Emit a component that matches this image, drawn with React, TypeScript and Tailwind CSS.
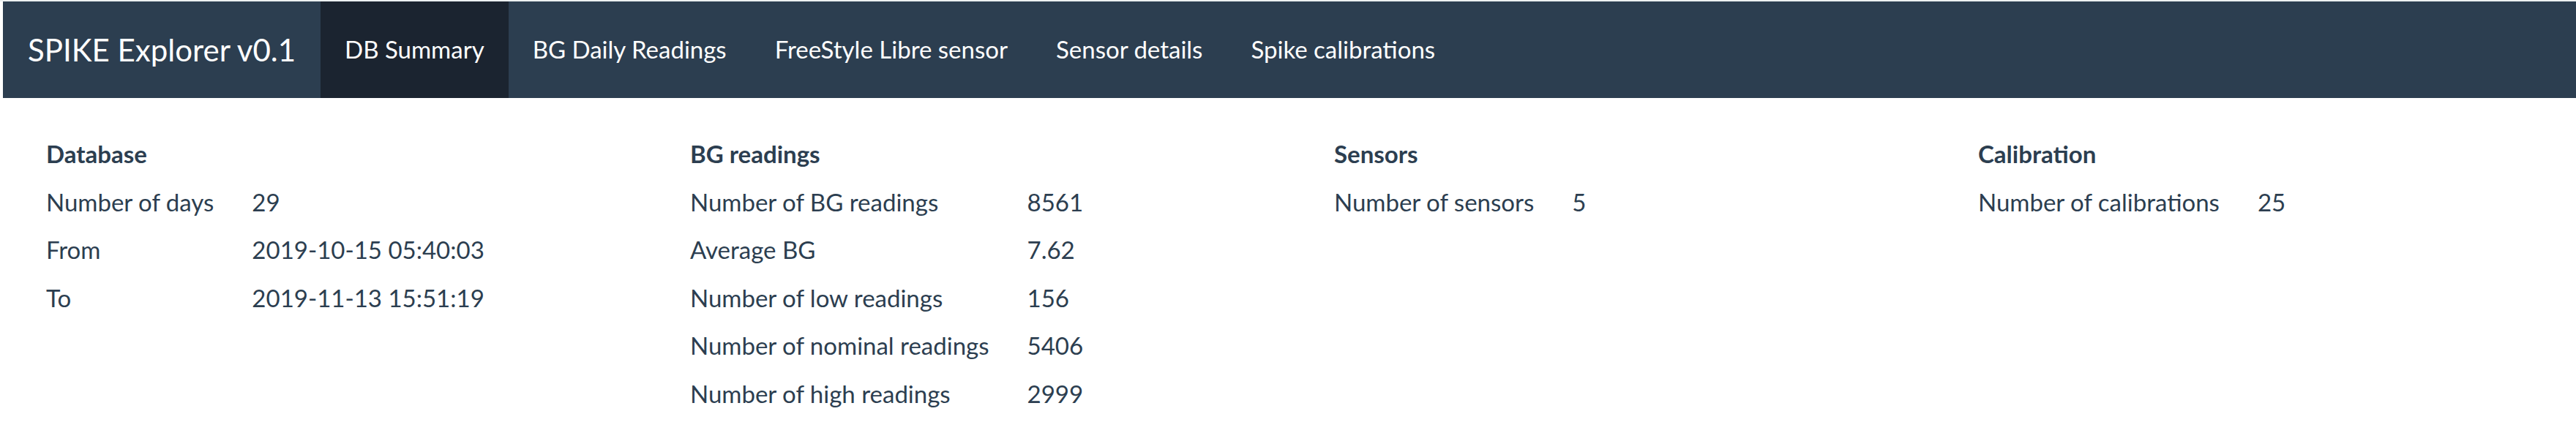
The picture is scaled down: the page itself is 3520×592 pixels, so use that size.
import React from 'react';

type Row = { label: string; value: string };

type Section = {
    title: string;
    rows: Row[];
};

const NAV_ITEMS = [
    'DB Summary',
    'BG Daily Readings',
    'FreeStyle Libre sensor',
    'Sensor details',
    'Spike calibrations',
];

const SECTIONS: Section[] = [
    {
        title: 'Database',
        rows: [
            { label: 'Number of days', value: '29' },
            { label: 'From', value: '2019-10-15 05:40:03' },
            { label: 'To', value: '2019-11-13 15:51:19' },
        ],
    },
    {
        title: 'BG readings',
        rows: [
            { label: 'Number of BG readings', value: '8561' },
            { label: 'Average BG', value: '7.62' },
            { label: 'Number of low readings', value: '156' },
            { label: 'Number of nominal readings', value: '5406' },
            { label: 'Number of high readings', value: '2999' },
        ],
    },
    {
        title: 'Sensors',
        rows: [{ label: 'Number of sensors', value: '5' }],
    },
    {
        title: 'Calibration',
        rows: [{ label: 'Number of calibrations', value: '25' }],
    },
];

const Navbar = () => {
    const active = 'DB Summary';
    return (
        <nav className="flex h-[132px] items-stretch bg-[#2c3e50] pl-[34px] text-white">
            <span className="mr-[34px] flex items-center text-[42px] leading-none">
                SPIKE Explorer v0.1
            </span>
            <ul className="flex items-stretch">
                {NAV_ITEMS.map((item) => (
                    <li
                        key={item}
                        className={
                            item === active
                                ? 'flex items-center bg-[#1b2430] px-[33px] text-[33px]'
                                : 'flex items-center px-[33px] text-[33px]'
                        }
                    >
                        {item}
                    </li>
                ))}
            </ul>
        </nav>
    );
};

const SummaryTable = ({ section }: { section: Section }) => {
    return (
        <div className="pl-[37px]">
            <table className="border-collapse">
                <thead>
                    <tr>
                        <th className="px-[26px] py-[8px] text-left text-[33px] font-bold leading-[1.5]">
                            {section.title}
                        </th>
                        <th className="px-[26px] py-[8px]" />
                    </tr>
                </thead>
                <tbody>
                    {section.rows.map((row) => (
                        <tr key={row.label}>
                            <td className="whitespace-nowrap px-[26px] py-[8px] text-[33px] leading-[1.5]">
                                {row.label}
                            </td>
                            <td className="whitespace-nowrap px-[26px] py-[8px] text-[33px] leading-[1.5]">
                                {row.value}
                            </td>
                        </tr>
                    ))}
                </tbody>
            </table>
        </div>
    );
};

export default function App() {
    return (
        <div className="min-h-[592px] bg-white font-['Lato',sans-serif] text-[#2c3e50]">
            <div className="h-[2px] bg-[#ecf0f1]" />
            <div className="pl-[4px]">
                <Navbar />
            </div>
            <div className="grid grid-cols-4 pt-[44px]">
                {SECTIONS.map((section) => (
                    <SummaryTable key={section.title} section={section} />
                ))}
            </div>
        </div>
    );
}
